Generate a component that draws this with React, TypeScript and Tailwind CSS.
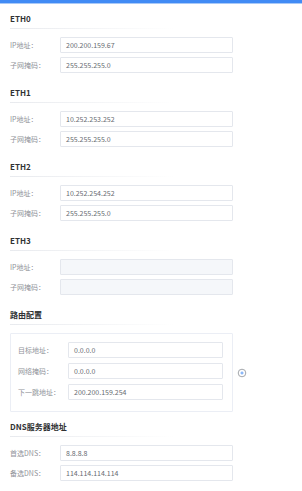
import React from "react";

// Network interface settings
const ethList = [
  { name: "ETH0", ip: "200.200.159.67", mask: "255.255.255.0" },
  { name: "ETH1", ip: "10.252.253.252", mask: "255.255.255.0" },
  { name: "ETH2", ip: "10.252.254.252", mask: "255.255.255.0" },
  { name: "ETH3", ip: "", mask: "", disabled: true },
];

const route = [
  { label: "目标地址：", value: "0.0.0.0" },
  { label: "网络掩码：", value: "0.0.0.0" },
  { label: "下一跳地址：", value: "200.200.159.254" },
];

const dns = [
  { label: "首选DNS：", value: "8.8.8.8" },
  { label: "备选DNS：", value: "114.114.114.114" },
];

function Heading({ title }: { title: string }) {
  return (
    <div>
      <div className="h-[12px] leading-[12px] text-[8px] font-bold text-[#303133]">{title}</div>
      <div className="mt-[3px] h-px w-[165px] bg-gradient-to-r from-[#e8eaee] to-transparent" />
    </div>
  );
}

function Field({
  label,
  value,
  disabled,
  labelWidth = "w-[50px]",
  inputWidth = "w-[173px]",
}: {
  label: string;
  value: string;
  disabled?: boolean;
  labelWidth?: string;
  inputWidth?: string;
}) {
  return (
    <div className="flex items-center h-[16px]">
      <div className={`${labelWidth} shrink-0 text-[7px] text-[#909399]`}>{label}</div>
      <div
        className={`${inputWidth} h-[16px] flex items-center px-[5px] border border-[#e4e7ed] rounded-[1px] text-[7px] text-[#666a70] ${
          disabled ? "bg-[#f5f7fa]" : "bg-white"
        }`}
      >
        {value}
      </div>
    </div>
  );
}

export default function App() {
  return (
    <div
      className="w-[302px] min-h-[491px] bg-white"
      style={{ fontFamily: '"Noto Sans CJK SC", "Noto Sans", sans-serif' }}
    >
      <div className="h-[3px] bg-[#418bf5] border-b border-[#a9c9f7] box-content" />

      <div className="pl-[10px] pt-[9px] flex flex-col gap-[14px]">
        {ethList.map((eth) => (
          <div key={eth.name}>
            <Heading title={eth.name} />
            <div className="mt-[8px] flex flex-col gap-[4px]">
              <Field label="IP地址：" value={eth.ip} disabled={eth.disabled} />
              <Field label="子网掩码：" value={eth.mask} disabled={eth.disabled} />
            </div>
          </div>
        ))}

        {/* 路由配置 */}
        <div>
          <Heading title="路由配置" />
          <div className="mt-[8px] flex items-center">
            <div className="w-[223px] border border-[#ebeef5] rounded-[1px] pt-[8px] pb-[11px] pl-[7px] pr-[9px] flex flex-col gap-[5px]">
              {route.map((r) => (
                <Field key={r.label} label={r.label} value={r.value} inputWidth="w-[155px]" />
              ))}
            </div>
            <svg className="ml-[4px]" width="10" height="10" viewBox="0 0 10 10">
              <circle cx="5" cy="5" r="3.8" fill="none" stroke="#8c8f96" strokeWidth="0.8" />
              <path d="M5 3.4v3.2M3.4 5h3.2" stroke="#4a8ff5" strokeWidth="0.8" />
            </svg>
          </div>
        </div>

        {/* DNS服务器地址 */}
        <div className="-mt-[5px]">
          <Heading title="DNS服务器地址" />
          <div className="mt-[8px] flex flex-col gap-[4px]">
            {dns.map((d) => (
              <Field key={d.label} label={d.label} value={d.value} />
            ))}
          </div>
        </div>
      </div>
    </div>
  );
}
